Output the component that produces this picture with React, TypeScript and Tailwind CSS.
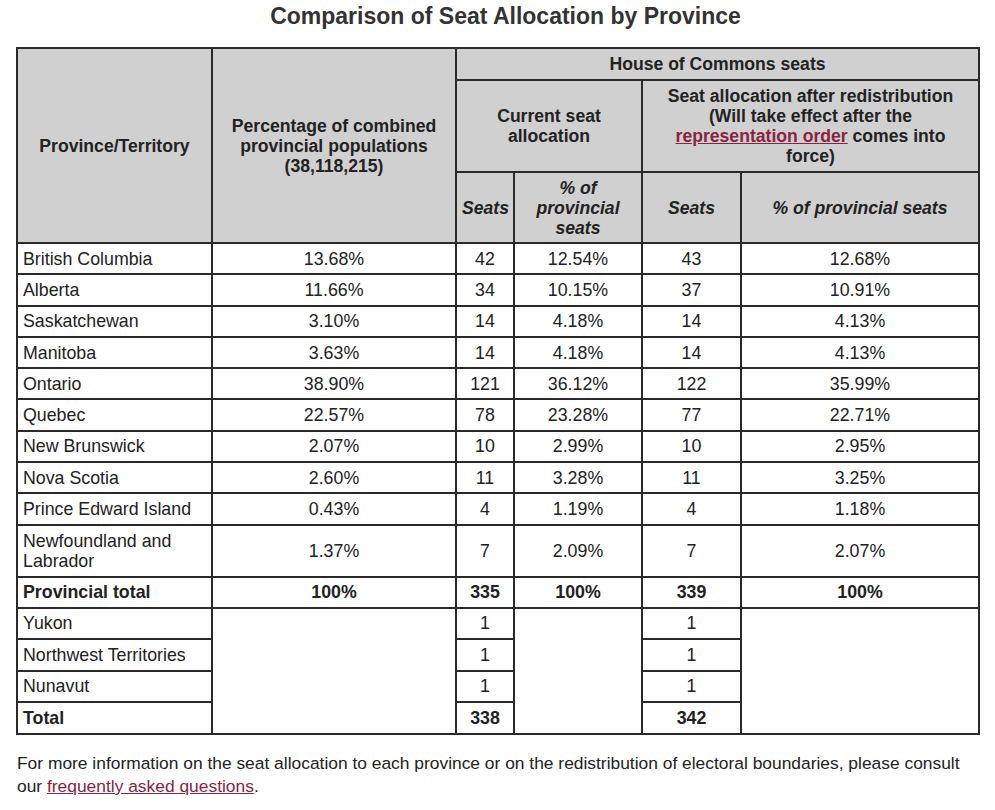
const rows = [
  ["British Columbia", "13.68%", "42", "12.54%", "43", "12.68%"],
  ["Alberta", "11.66%", "34", "10.15%", "37", "10.91%"],
  ["Saskatchewan", "3.10%", "14", "4.18%", "14", "4.13%"],
  ["Manitoba", "3.63%", "14", "4.18%", "14", "4.13%"],
  ["Ontario", "38.90%", "121", "36.12%", "122", "35.99%"],
  ["Quebec", "22.57%", "78", "23.28%", "77", "22.71%"],
  ["New Brunswick", "2.07%", "10", "2.99%", "10", "2.95%"],
  ["Nova Scotia", "2.60%", "11", "3.28%", "11", "3.25%"],
  ["Prince Edward Island", "0.43%", "4", "1.19%", "4", "1.18%"],
];

const cell = "border-2 border-[#2a2a2a] px-[5px] leading-[20px]";
const head = cell + " bg-[#d0d0d0] font-bold text-center";

const App = () => {
  return (
    <div className="w-[995px] h-[810px] bg-white text-[#222] text-[17.8px] font-['Liberation_Sans',Arial,sans-serif]">
      <h1 className="text-center text-[23px] font-bold text-[#333] pt-[3px] pl-[16px] h-[47px] leading-[26px]">
        Comparison of Seat Allocation by Province
      </h1>

      <table className="ml-[16px] w-[962px] border-collapse table-fixed">
        <colgroup>
          <col className="w-[195px]" />
          <col className="w-[244px]" />
          <col className="w-[58px]" />
          <col className="w-[128px]" />
          <col className="w-[99px]" />
          <col className="w-[238px]" />
        </colgroup>
        <thead className="text-[17.6px]">
          <tr className="h-[32px]">
            <th rowSpan={3} className={head}>
              Province/Territory
            </th>
            <th rowSpan={3} className={head + " px-[14px]"}>
              Percentage of combined provincial populations (38,118,215)
            </th>
            <th colSpan={4} className={head}>
              House of Commons seats
            </th>
          </tr>
          <tr className="h-[92px]">
            <th colSpan={2} className={head + " px-[30px]"}>
              Current seat allocation
            </th>
            <th colSpan={2} className={head + " px-[14px]"}>
              Seat allocation after redistribution (Will take effect after the{" "}
              <a href="#" className="text-[#8a2343] underline">
                representation order
              </a>{" "}
              comes into force)
            </th>
          </tr>
          <tr className="h-[71px] italic">
            <th className={head + " px-[2px]"}>Seats</th>
            <th className={head}>% of provincial seats</th>
            <th className={head}>Seats</th>
            <th className={head}>% of provincial seats</th>
          </tr>
        </thead>
        <tbody>
          {rows.map((r) => (
            <tr key={r[0]} className="h-[31.3px]">
              <td className={cell}>{r[0]}</td>
              {r.slice(1).map((v, i) => (
                <td key={i} className={cell + " text-center"}>
                  {v}
                </td>
              ))}
            </tr>
          ))}
          <tr className="h-[52px]">
            <td className={cell}>Newfoundland and Labrador</td>
            <td className={cell + " text-center"}>1.37%</td>
            <td className={cell + " text-center"}>7</td>
            <td className={cell + " text-center"}>2.09%</td>
            <td className={cell + " text-center"}>7</td>
            <td className={cell + " text-center"}>2.07%</td>
          </tr>
          <tr className="h-[31px] font-bold">
            <td className={cell}>Provincial total</td>
            <td className={cell + " text-center"}>100%</td>
            <td className={cell + " text-center"}>335</td>
            <td className={cell + " text-center"}>100%</td>
            <td className={cell + " text-center"}>339</td>
            <td className={cell + " text-center"}>100%</td>
          </tr>
          <tr className="h-[31.5px]">
            <td className={cell}>Yukon</td>
            <td rowSpan={4} className={cell}></td>
            <td className={cell + " text-center"}>1</td>
            <td rowSpan={4} className={cell}></td>
            <td className={cell + " text-center"}>1</td>
            <td rowSpan={4} className={cell}></td>
          </tr>
          <tr className="h-[31.5px]">
            <td className={cell}>Northwest Territories</td>
            <td className={cell + " text-center"}>1</td>
            <td className={cell + " text-center"}>1</td>
          </tr>
          <tr className="h-[31.5px]">
            <td className={cell}>Nunavut</td>
            <td className={cell + " text-center"}>1</td>
            <td className={cell + " text-center"}>1</td>
          </tr>
          <tr className="h-[31.5px] font-bold">
            <td className={cell}>Total</td>
            <td className={cell + " text-center"}>338</td>
            <td className={cell + " text-center"}>342</td>
          </tr>
        </tbody>
      </table>

      <p className="ml-[17px] mr-[18px] mt-[17px] leading-[23px] text-[17.4px]">
        For more information on the seat allocation to each province or on the redistribution of electoral
        boundaries, please consult our{" "}
        <a href="#" className="text-[#8a2343] underline">
          frequently asked questions
        </a>
        .
      </p>
    </div>
  );
};

export default App;
